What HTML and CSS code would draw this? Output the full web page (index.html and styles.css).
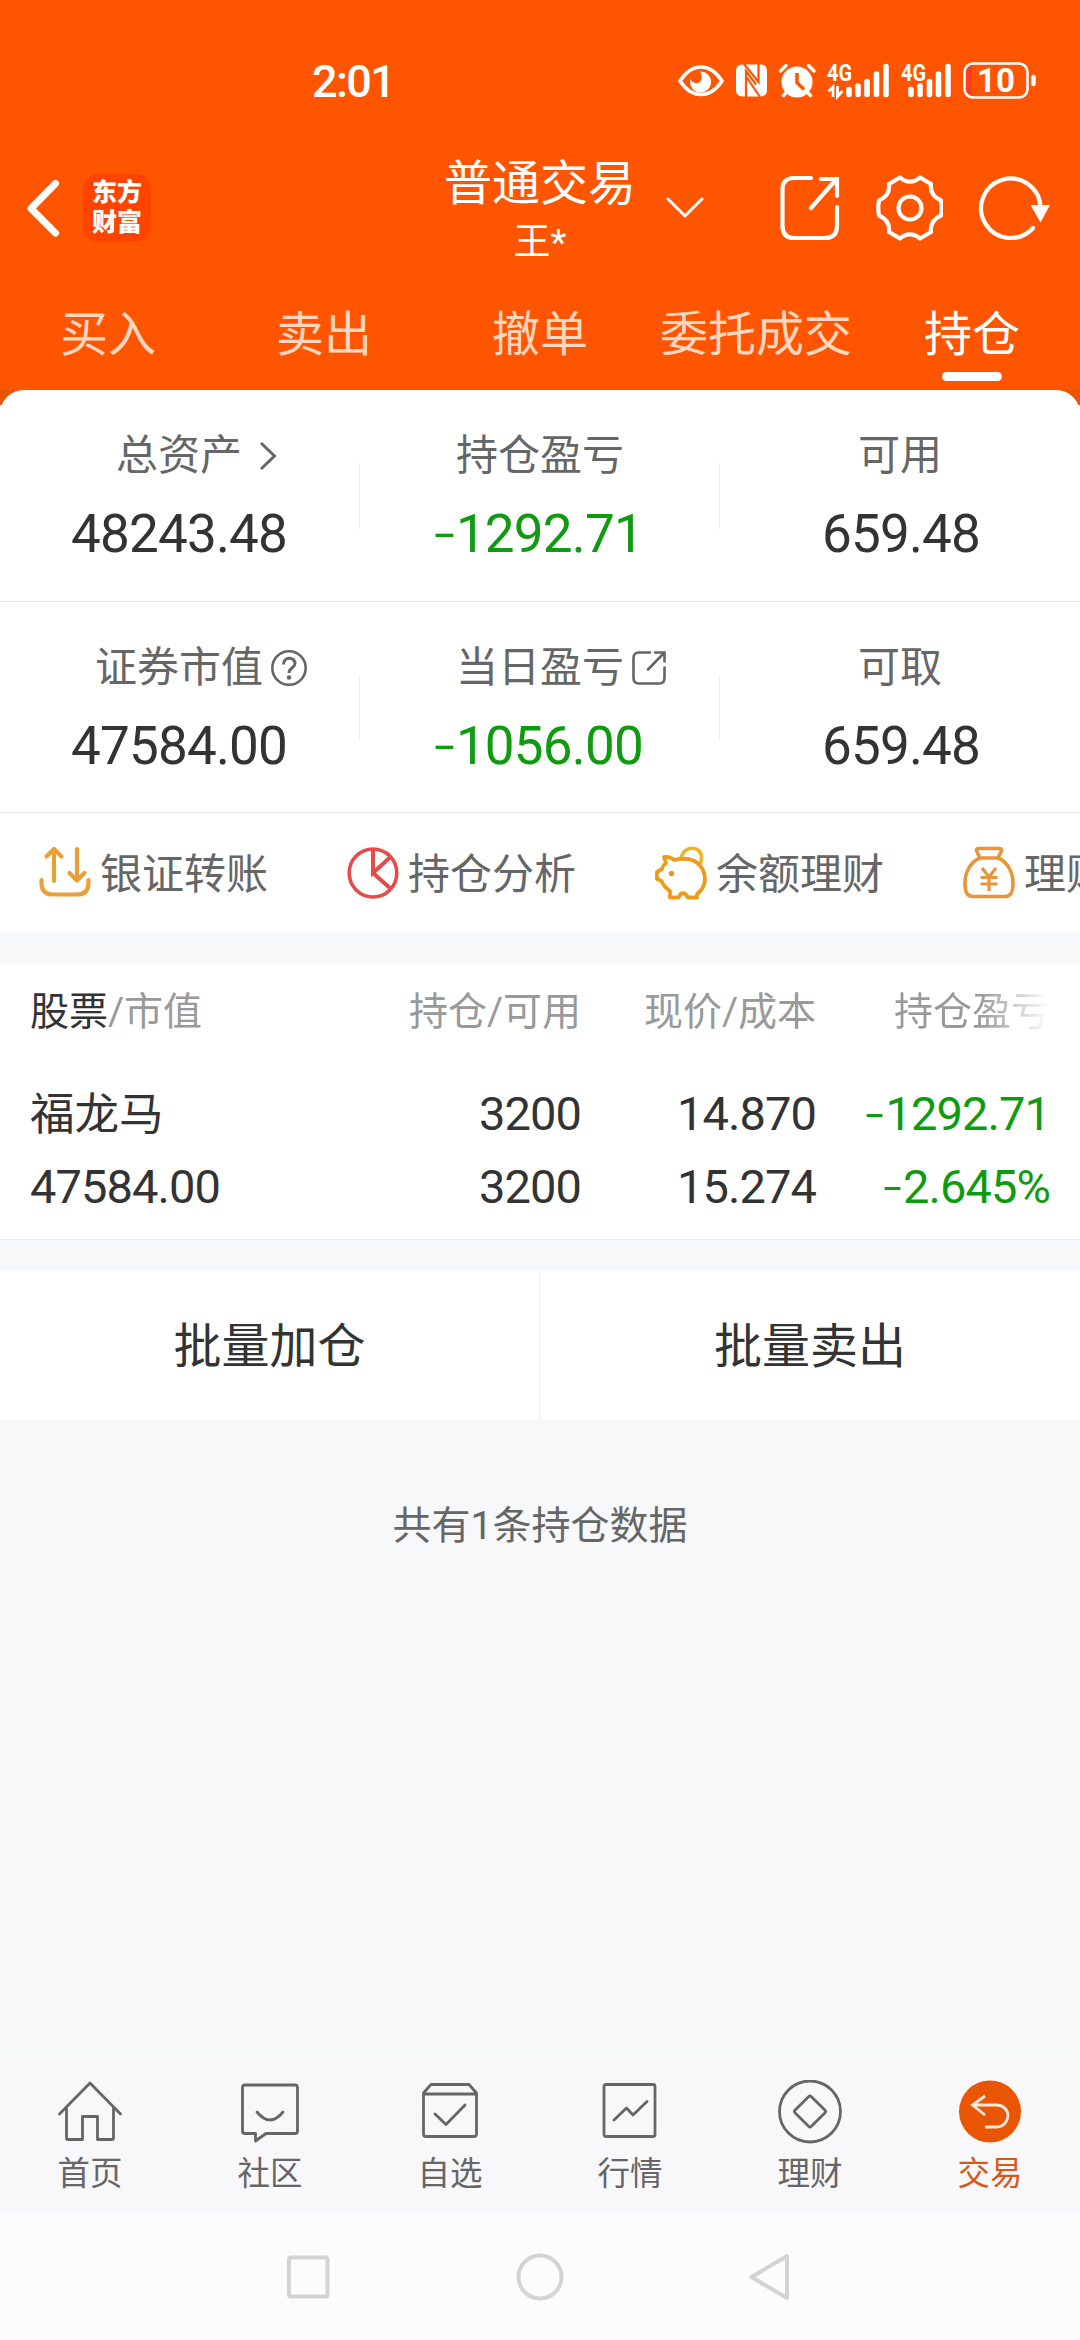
FILE: index.html
```html
<!DOCTYPE html>
<html lang="zh-CN">
<head>
<meta charset="UTF-8">
<meta name="viewport" content="width=device-width, initial-scale=1.0">
<title>普通交易 - 持仓</title>
<link rel="stylesheet" href="styles.css">
</head>
<body>

<header class="header">
  <div class="status-bar">
    <span class="time">2:01</span>
    <svg class="status-icons" width="360" height="40" viewBox="678 60 360 40">
      <!-- eye -->
      <path d="M680 81Q689 67 701 67T722 81Q713 94.500 701 94.500T680 81Z" fill="none" stroke="#fff" stroke-width="3.600" stroke-linejoin="round"/>
      <path d="M700 71.500A10.500 10.500 0 1 1 690.500 79C692 84 700 85 701.500 79C702.300 76 701 73.500 700 71.500Z" fill="#fff"/>
      <!-- nfc -->
      <rect x="736" y="64.500" width="31" height="32" rx="6" fill="#fff"/>
      <path d="M746 97V71L756 84.500M744 64L758.500 82V64M746.500 77L760 97" fill="none" stroke="#ff5500" stroke-width="2.200"/>
      <!-- alarm -->
      <circle cx="797" cy="82" r="15.500" fill="#fff"/>
      <path d="M780.500 71L786 65.500M808.500 65.500L814 71M787 92L783.500 95.500M807 92L810.500 95.500" stroke="#fff" stroke-width="3.500" stroke-linecap="round"/>
      <path d="M797 73V82.500L804 89.500" fill="none" stroke="#ff5500" stroke-width="3.500"/>
      <!-- signal -->
      <text class="net" x="827" y="80.500" textLength="25" lengthAdjust="spacingAndGlyphs">4G</text>
      <path d="M833 97V87L828.500 91.500M837.500 86V96.500L842.500 91" fill="none" stroke="#fff" stroke-width="2.800"/>
      <path d="M849 89.500V94.500M858 86V94.500M867 81.500V94.500M876.500 74V94.500M886 66.500V94.500" stroke="#fff" stroke-width="5.600" stroke-linecap="round"/>
      <text class="net" x="901" y="80.500" textLength="25" lengthAdjust="spacingAndGlyphs">4G</text>
      <path d="M911 89.500V94.500M920 86V94.500M929.500 81.500V94.500M938.500 74V94.500M948 66.500V94.500" stroke="#fff" stroke-width="5.600" stroke-linecap="round"/>
      <!-- battery -->
      <path d="M972 65.500V95C968 95 966 92 966 89V72C966 68 968 65.500 972 65.500Z" fill="#ff3b20"/>
      <rect x="964.500" y="63.500" width="63" height="34" rx="8.500" fill="none" stroke="#fff" stroke-width="2.600"/>
      <path d="M1033.500 77V84" stroke="#fff" stroke-width="4.500" stroke-linecap="round"/>
      <text class="battery" x="996" y="92" text-anchor="middle">10</text>
    </svg>
  </div>

  <div class="title-bar">
    <svg class="back" width="36" height="60" viewBox="0 0 36 60"><path d="M30.500 5.500L6 30.500L30.500 55" fill="none" stroke="#fff" stroke-width="7" stroke-linecap="round" stroke-linejoin="round"/></svg>
    <div class="logo">东方<br>财富</div>
    <div class="title">
      <h1>普通交易</h1>
      <p>王*</p>
    </div>
    <svg class="down" width="38" height="22" viewBox="0 0 38 22"><path d="M2 2L19 19L36 2" fill="none" stroke="#fff" stroke-width="3" stroke-linecap="round"/></svg>
    <div class="tools">
      <svg width="60" height="66" viewBox="0 0 60 66"><path d="M31 3H14Q2.500 3 2.500 15V51Q2.500 63 14 63H45Q57 63 57 51V32M41 4H57V21M56.500 4L31 33" fill="none" stroke="#fff" stroke-width="4.200" stroke-linecap="round"/></svg>
      <svg width="68" height="66" viewBox="-1 0 68 66"><path d="M24 2.500L13 9C14 17 11 22 3 25.500Q1.500 33 3 40.500C11 44 14 49 13 57L24 63.500C30 58 38 58 44 63.500L55 57C54 49 57 44 65 40.500Q66.500 33 65 25.500C57 22 54 17 55 9L44 2.500C38 8 30 8 24 2.500Z" fill="none" stroke="#fff" stroke-width="4.200" stroke-linejoin="round"/><circle cx="34" cy="33" r="11.500" fill="none" stroke="#fff" stroke-width="4.200"/></svg>
      <svg width="72" height="66" viewBox="0 0 72 66"><path d="M55 53A29.700 29.700 0 1 1 62.500 33" fill="none" stroke="#fff" stroke-width="4.200" stroke-linecap="round"/><path d="M52.500 30H72L62.500 47.500Z" fill="#fff"/></svg>
    </div>
  </div>

  <nav class="tabs">
    <a>买入</a>
    <a>卖出</a>
    <a>撤单</a>
    <a>委托成交</a>
    <a class="active">持仓</a>
  </nav>
</header>

<section class="assets">
  <div class="stat-row">
    <div class="stat">
      <div class="label">总资产<svg class="more" width="18" height="30" viewBox="0 0 18 30"><path d="M2 2L15.500 15L2 28" fill="none" stroke="#666" stroke-width="3"/></svg></div>
      <div class="value">48243.48</div>
    </div>
    <div class="stat">
      <div class="label">持仓盈亏</div>
      <div class="value down-color"><span class="minus">-</span>1292.71</div>
    </div>
    <div class="stat">
      <div class="label">可用</div>
      <div class="value">659.48</div>
    </div>
  </div>
  <div class="stat-row">
    <div class="stat">
      <div class="label">证券市值<svg class="help" width="36" height="36" viewBox="0 0 36 36"><circle cx="18" cy="18" r="16.700" fill="none" stroke="#666" stroke-width="2.600"/><path d="M12.500 14.500C12.500 6 24 6.500 24 13.500C24 18 18 17.500 18 23" fill="none" stroke="#666" stroke-width="3"/><circle cx="18" cy="27.500" r="2.200" fill="#666"/></svg></div>
      <div class="value">47584.00</div>
    </div>
    <div class="stat">
      <div class="label">当日盈亏<svg class="open" width="34" height="35" viewBox="0 0 34 35"><path d="M18 2H7Q1.500 2 1.500 7.500V27.500Q1.500 33 7 33H27Q32.500 33 32.500 27.500V17M23 2H32.500V11M32 2.500L16 19" fill="none" stroke="#666" stroke-width="2.600" stroke-linecap="round"/></svg></div>
      <div class="value down-color"><span class="minus">-</span>1056.00</div>
    </div>
    <div class="stat">
      <div class="label">可取</div>
      <div class="value">659.48</div>
    </div>
  </div>

  <div class="actions">
    <a><svg width="52" height="54" viewBox="0 0 52 54"><path d="M15 35V4M7.500 10.500L15 3L22.500 10.500M38 3V34M30.500 27L38 34.500L45.500 27M2.500 34V37Q2.500 48.500 14 48.500H38Q49.500 48.500 49.500 37V34" fill="none" stroke="#e9a03b" stroke-width="4.200" stroke-linecap="round" stroke-linejoin="round"/></svg><span>银证转账</span></a>
    <a><svg width="52" height="54" viewBox="0 0 52 54"><path d="M26 2.500V27L44 10.500M26 27L44 43" fill="none" stroke="#e64b4b" stroke-width="4"/><ellipse cx="26" cy="27" rx="23.800" ry="24" fill="none" stroke="#e64b4b" stroke-width="3.600"/></svg><span>持仓分析</span></a>
    <a><svg width="52" height="54" viewBox="0 0 52 54"><path d="M26 13C28 -1.500 47 -1 46.500 12Q46.500 15 45 18" fill="none" stroke="#f0b429" stroke-width="3.600"/><path d="M9 11Q15 10 19 14C32 11 42 14 47 22C53 33 49 43 42 48V51.500H33L30 47.500H26L23.500 51.500H15V45Q9 41 6.500 35L2 33V26L7 23Q8 19 11 17Z" fill="none" stroke="#eb9c1f" stroke-width="3.800" stroke-linejoin="round"/><circle cx="16.500" cy="27.500" r="2.700" fill="#e8961e"/></svg><span>余额理财</span></a>
    <a><svg width="52" height="54" viewBox="0 0 52 54"><path d="M17 12L13.500 5Q13 2.500 16 2.500H36Q39 2.500 38.500 5L35 12M17 12H35C45 16 50 27 50 37C50 46 48 50.500 42 50.500H10C4 50.500 2 46 2 37C2 27 7 16 17 12Z" fill="none" stroke="#e9953a" stroke-width="3.600" stroke-linejoin="round"/><path d="M19 22L26 31L33 22M26 31V45M17.500 31.500H34.500M17.500 38H34.500" fill="none" stroke="#e9953a" stroke-width="3.200"/></svg><span>理财</span></a>
  </div>
</section>

<section class="positions">
  <div class="pos-head">
    <span><b>股票</b>/市值</span>
    <span>持仓/可用</span>
    <span>现价/成本</span>
    <span class="fade">持仓盈亏</span>
  </div>
  <div class="pos-row">
    <span class="stock">福龙马</span>
    <span>3200</span>
    <span>14.870</span>
    <span class="down-color"><span class="minus">-</span>1292.71</span>
    <span>47584.00</span>
    <span>3200</span>
    <span>15.274</span>
    <span class="down-color"><span class="minus">-</span>2.645%</span>
  </div>
</section>

<div class="batch">
  <button>批量加仓</button>
  <button>批量卖出</button>
</div>

<p class="summary">共有1条持仓数据</p>

<nav class="bottom-bar">
  <a><svg width="66" height="66" viewBox="0 0 66 66"><path d="M2.500 34L33 3L63.500 34M9.500 28V58Q9.500 59.500 11 59.500H25.500V36.500H40.500V59.500H55Q56.500 59.500 56.500 58V28"/></svg>首页</a>
  <a><svg width="66" height="66" viewBox="0 0 66 66"><path d="M8 5H58Q60.500 5 60.500 7.500V51Q60.500 53.500 58 53.500H29L18.500 61V53.500H8Q5.500 53.500 5.500 51V7.500Q5.500 5 8 5Z"/><path d="M20 32Q33 48 46 32"/></svg>社区</a>
  <a><svg width="66" height="66" viewBox="0 0 66 66"><path d="M6.500 13L14 4.500H52L59.500 13V54Q59.500 56.500 57 56.500H9Q6.500 56.500 6.500 54ZM6.500 14H59.500M18 34L29 44.500L48 25"/></svg>自选</a>
  <a><svg width="66" height="66" viewBox="0 0 66 66"><rect x="7" y="4.500" width="51" height="52" rx="2"/><path d="M17 40L29.500 28L36 35L50 21.500"/></svg>行情</a>
  <a><svg width="66" height="66" viewBox="0 0 66 66"><circle cx="33" cy="31.500" r="30.500"/><rect x="21.500" y="20" width="23" height="23" rx="2" transform="rotate(45 33 31.500)"/></svg>理财</a>
  <a class="active"><svg width="66" height="66" viewBox="0 0 66 66"><circle class="dot" cx="33" cy="31.500" r="31"/><path class="arrow" d="M28 16L15.500 25L28 35M16 25H40C55 26 54 46 40 47H28"/></svg>交易</a>
</nav>

<div class="system-nav">
  <svg width="50" height="50" viewBox="0 0 50 50"><rect x="5" y="5.500" width="38.500" height="39" rx="2"/></svg>
  <svg width="50" height="50" viewBox="0 0 50 50"><circle cx="25" cy="25" r="21.500"/></svg>
  <svg width="50" height="50" viewBox="0 0 50 50"><path d="M5.500 25L41 4V46Z"/></svg>
</div>

</body>
</html>
```

FILE: styles.css
```css
* {
  box-sizing: border-box;
  margin: 0;
  padding: 0;
}

body {
  width: 1080px;
  height: 2340px;
  display: flex;
  flex-direction: column;
  overflow: hidden;
  background: #f7f8fa;
  color: #333;
  font-family: Roboto, "Noto Sans CJK SC", sans-serif;
}

svg {
  display: block;
  flex: none;
}

.header {
  height: 405px;
  flex: none;
  background: linear-gradient(#ff5500 390px, #e95504 390px);
  color: #fff;
}

.status-bar {
  height: 140px;
  padding: 60px 42px 0 312px;
  display: flex;
  justify-content: space-between;
}

.time {
  font-size: 45px;
  font-weight: 500;
  line-height: 43px;
  letter-spacing: -1.6px;
}

.net {
  font-size: 23px;
  font-weight: 700;
  fill: #fff;
}

.battery {
  font-size: 33px;
  font-weight: 700;
  fill: #fff;
}

.title-bar {
  height: 136px;
  display: grid;
  grid-template-columns: 83px 68px 283px 212px 1fr auto;
  align-items: center;
  padding: 0 30px 0 0;
}

.back {
  margin-left: 25px;
}

.logo {
  width: 68px;
  height: 68px;
  border-radius: 15px;
  background: #ff4400;
  font-size: 25px;
  font-weight: 900;
  line-height: 30px;
  text-align: center;
  padding-top: 4px;
}

.title {
  grid-column: 4;
  padding-top: 3px;
  text-align: center;
}

.title h1 {
  font-size: 48px;
  font-weight: 400;
  line-height: 66px;
}

.title p {
  font-size: 37px;
  line-height: 52px;
}

.down {
  margin-left: 20px;
}

.tools {
  display: flex;
  gap: 35px;
}

.tabs {
  height: 114px;
  display: grid;
  grid-template-columns: repeat(5, 1fr);
}

.tabs a {
  display: flex;
  flex-direction: column;
  align-items: center;
  padding-top: 24px;
  font-size: 48px;
  line-height: 70px;
  color: #ffd6bf;
}

.tabs .active {
  color: #fff;
}

.tabs .active::after {
  content: "";
  width: 60px;
  height: 9px;
  margin-top: 2px;
  border-radius: 5px;
  background: #fff;
}

.assets {
  margin-top: -15px;
  height: 543px;
  flex: none;
  border-radius: 24px 24px 0 0;
  background: #fff;
  overflow: hidden;
}

.stat-row {
  display: grid;
  grid-template-columns: repeat(3, 1fr);
  height: 211.5px;
  border-bottom: 1px solid #eaeaea;
}

.stat {
  padding-top: 36px;
  text-align: center;
  background: linear-gradient(#eee, #eee) no-repeat right 73px / 1px 66px;
}

.stat:last-child {
  background: none;
}

.stat .label {
  position: relative;
  width: max-content;
  margin: 0 auto;
  font-size: 42px;
  line-height: 60px;
  color: #666;
}

.stat .label svg {
  position: absolute;
  left: 100%;
  top: 50%;
  margin-left: 8px;
  transform: translateY(-50%);
}

.stat .label .more {
  margin-left: 17px;
}

.stat .value {
  margin-top: 18px;
  font-size: 53px;
  line-height: 60px;
  letter-spacing: -0.8px;
}

.stat:first-child .label,
.stat:first-child .value {
  transform: translateX(-1px);
}

.stat:last-child .value {
  transform: translateX(1px);
}

.value.down-color,
.pos-row .down-color {
  color: #0f9b0f;
}

/* wider minus sign for losses */
.minus {
  display: inline-block;
  margin-right: 5px;
  transform: scale(1.4, 0.85);
}

.actions {
  display: flex;
  gap: 79px;
  height: 120px;
  padding-left: 39px;
  align-items: center;
  white-space: nowrap;
}

.actions a {
  display: flex;
  flex: none;
  align-items: center;
  gap: 9px;
  font-size: 42px;
  color: #666;
}

.actions span {
  margin-top: -5px;
}

.positions {
  height: 277px;
  flex: none;
  margin-top: 30px;
  background: #fff;
  border-bottom: 1px solid #eee;
}

.pos-head,
.pos-row {
  display: grid;
  grid-template-columns: 300px 251px 235px 234px;
  padding: 0 30px;
  text-align: right;
}

.pos-head {
  padding-top: 19px;
  font-size: 39px;
  line-height: 60px;
  color: #999;
}

.pos-head b {
  font-weight: 400;
  color: #333;
}

.pos-head span:first-child,
.pos-row > span:nth-child(4n+1) {
  text-align: left;
}

.fade {
  background: linear-gradient(to right, #999 70%, #fff 100%);
  background-clip: text;
  color: transparent;
}

.pos-row {
  padding-top: 35px;
  font-size: 47px;
  line-height: 73px;
  letter-spacing: -0.9px;
}

.pos-row .stock {
  font-size: 44.5px;
  letter-spacing: 0;
  transform: translateY(2px);
}

.batch {
  display: grid;
  grid-template-columns: 1fr 1fr;
  height: 150px;
  flex: none;
  margin-top: 30px;
  background: #fff;
}

.batch button {
  border: none;
  background: none;
  padding-bottom: 6px;
  font: inherit;
  font-size: 48px;
  color: #333;
}

.batch button:first-child {
  border-right: 1px solid #eee;
}

.summary {
  margin-top: 76px;
  text-align: center;
  font-size: 39px;
  line-height: 60px;
  color: #666;
}

.bottom-bar {
  display: grid;
  grid-template-columns: repeat(6, 1fr);
  height: 158px;
  flex: none;
  margin-top: auto;
  background: #f8f8fa;
}

.bottom-bar a {
  display: flex;
  flex-direction: column;
  align-items: center;
  padding-top: 24px;
  font-size: 32.5px;
  line-height: 56px;
  color: #666;
}

.bottom-bar svg {
  fill: none;
  stroke: #666;
  stroke-width: 2.8;
  stroke-linecap: round;
  stroke-linejoin: round;
}

.bottom-bar .active {
  color: #d9581a;
}

.bottom-bar .dot {
  fill: #ea5504;
  stroke: none;
}

.bottom-bar .arrow {
  stroke: #ffe9d8;
  stroke-linecap: butt;
  stroke-linejoin: miter;
}

.system-nav {
  display: flex;
  justify-content: center;
  gap: 181px;
  height: 126px;
  flex: none;
  padding-top: 38px;
  background: #fcfcfc;
}

.system-nav svg {
  fill: none;
  stroke: #d3d3d3;
  stroke-width: 4;
  stroke-linejoin: round;
}
```
